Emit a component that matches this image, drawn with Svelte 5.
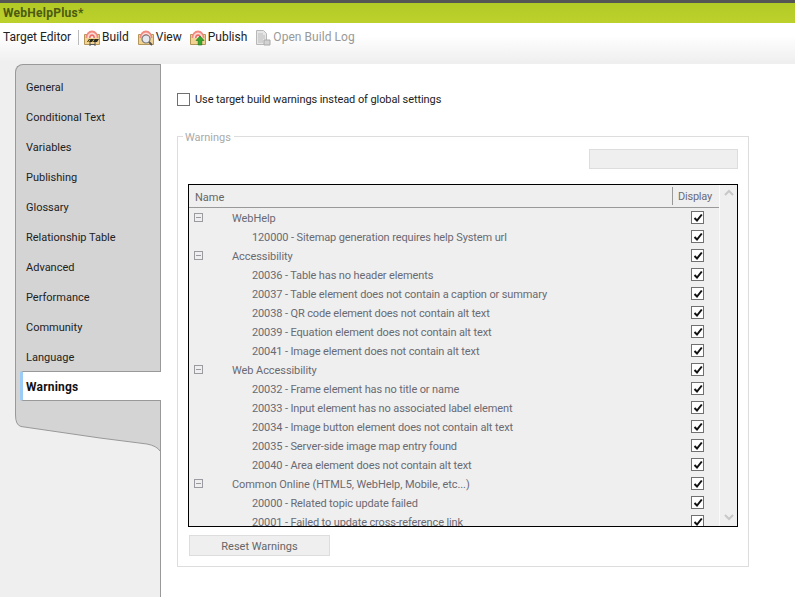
<script>
  const tabs = ['General', 'Conditional Text', 'Variables', 'Publishing', 'Glossary', 'Relationship Table', 'Advanced', 'Performance', 'Community', 'Language', 'Warnings'];

  const rows = [
    { group: true, text: 'WebHelp' },
    { text: '120000 - Sitemap generation requires help System url' },
    { group: true, text: 'Accessibility' },
    { text: '20036 - Table has no header elements' },
    { text: '20037 - Table element does not contain a caption or summary' },
    { text: '20038 - QR code element does not contain alt text' },
    { text: '20039 - Equation element does not contain alt text' },
    { text: '20041 - Image element does not contain alt text' },
    { group: true, text: 'Web Accessibility' },
    { text: '20032 - Frame element has no title or name' },
    { text: '20033 - Input element has no associated label element' },
    { text: '20034 - Image button element does not contain alt text' },
    { text: '20035 - Server-side image map entry found' },
    { text: '20040 - Area element does not contain alt text' },
    { group: true, text: 'Common Online (HTML5, WebHelp, Mobile, etc...)' },
    { text: '20000 - Related topic update failed' },
    { text: '20001 - Failed to update cross-reference link' }
  ];
</script>

{#snippet targetIcon()}
  <path d="M.5 5.5h15v10H.5z" fill="#f3d391" stroke="#b3965a" />
  <path d="M1.5 9a6.5 7.5 0 0 1 13 0z" fill="#f28a80" />
  <path d="M3.3 9a4.7 5.6 0 0 1 9.4 0z" fill="#fbdcd6" />
  <path d="M5 9a3 3.8 0 0 1 6 0z" fill="#ee6e64" />
  <path d="M6.6 9a1.4 2 0 0 1 2.8 0z" fill="#fdeeea" />
{/snippet}

<div class="app">
  <div class="titlebar">WebHelpPlus*</div>

  <div class="toolbar">
    <span class="tool-title">Target Editor</span>
    <span class="sep"></span>
    <button class="tool build">
      <svg width="17" height="17" viewBox="0 0 17 17">
        {@render targetIcon()}
        <path d="M5 10h10l-2 3H3z" fill="#2a2a20" />
        <path d="M6 10.5l-1.5 2.5M10 10.5L8.5 13" stroke="#e8c23a" />
        <path d="M6 13v4M11 13v4M6 15.5h5" stroke="#555" fill="none" />
      </svg>
      Build
    </button>
    <button class="tool view">
      <svg width="17" height="17" viewBox="0 0 17 17">
        {@render targetIcon()}
        <circle cx="8" cy="10" r="4" fill="#e4e8ee" stroke="#777" stroke-width="1.2" />
        <path d="M11 13l3 3" stroke="#555" stroke-width="1.8" />
      </svg>
      View
    </button>
    <button class="tool publish">
      <svg width="17" height="17" viewBox="0 0 17 17">
        {@render targetIcon()}
        <path d="M10 7l4 4.5h-2.2V16H8.200v-4.500H6z" fill="#35a82e" stroke="#1c6e1a" stroke-width=".6" />
      </svg>
      Publish
    </button>
    <button class="tool log" disabled>
      <svg width="17" height="17" viewBox="0 0 17 17">
        <path d="M2.500 1.500h7l3 3v11h-10z" fill="#e6e6e6" stroke="#b8b8b8" />
        <path d="M4 5h5M4 7h7M4 9h7M4 11h5M4 13h5" stroke="#bdbdbd" />
        <path d="M10 11h6v5h-6z" fill="#d2d2d2" stroke="#aaa" />
      </svg>
      Open Build Log
    </button>
  </div>

  <div class="main">
    <aside class="sidebar">
      <div class="tab-panel">
        {#each tabs as tab}
          <div class="tab" class:active={tab === 'Warnings'}>{tab}</div>
        {/each}
      </div>
      <svg class="tail" width="146" height="51" viewBox="0 0 146 51">
        <path d="M.5 0v15Q.5 25 6 26.500L85 38l47 6q10 2 13 7V0z" fill="#d4d4d4" />
        <path d="M.5 0v15Q.5 25 6 26.500L85 38l47 6q10 2 13 7" fill="none" stroke="#999" />
      </svg>
    </aside>

    <section class="content">
      <label class="use-target">
        <span class="box"></span>
        Use target build warnings instead of global settings
      </label>

      <div class="group">
        <span class="legend">Warnings</span>
        <div class="filter-row"><div class="filter"></div></div>

        <div class="grid">
          <div class="grid-main">
            <div class="grid-head">
              <span class="col-name">Name</span>
              <span class="col-display">Display</span>
            </div>
            <div class="grid-body">
              {#each rows as row}
                <div class="row">
                  {#if row.group}
                    <span class="minus"></span>
                  {/if}
                  <span class="row-text" class:child={!row.group}>{row.text}</span>
                  <span class="check">
                    <svg width="10" height="10" viewBox="0 0 10 10">
                      <path d="M1.500 5l2.500 2.500L8.800 1.500" fill="none" stroke="#111" stroke-width="2" />
                    </svg>
                  </span>
                </div>
              {/each}
            </div>
          </div>
          <div class="scrollbar">
            <svg width="10" height="8" viewBox="0 0 10 8"><path d="M1 6l4-4 4 4" fill="none" stroke="#c8c8c8" stroke-width="2" /></svg>
            <svg width="10" height="8" viewBox="0 0 10 8"><path d="M1 2l4 4 4-4" fill="none" stroke="#c8c8c8" stroke-width="2" /></svg>
          </div>
        </div>

        <button class="reset">Reset Warnings</button>
      </div>
    </section>
  </div>
</div>

<style>
  :global(body) {
    margin: 0;
    background: #efefef;
    overflow: hidden;
  }

  .app {
    height: 597px;
    display: flex;
    flex-direction: column;
    font-family: Roboto, "Noto Sans", sans-serif;
    font-size: 11px;
    color: #222;
    overflow: hidden;
  }

  .titlebar {
    box-sizing: border-box;
    height: 23px;
    border-top: 3px solid #555;
    background: linear-gradient(#b2ca26, #bdd12c);
    color: #4c5a12;
    font-weight: 700;
    font-size: 12px;
    letter-spacing: .25px;
    line-height: 20px;
    padding-left: 3px;
  }

  .toolbar {
    box-sizing: border-box;
    height: 41px;
    padding: 1px 0 14px 3px;
    background: linear-gradient(#fff 30%, #efefef 95%);
    display: flex;
    align-items: center;
    font-size: 12px;
  }

  .sep {
    width: 1px;
    height: 15px;
    background: #bbb;
    margin: 0 5px 0 7px;
  }

  .tool {
    display: flex;
    align-items: center;
    gap: 1px;
    padding: 0;
    border: none;
    background: none;
    font: inherit;
    color: inherit;
  }

  .build { margin-right: 9px; }
  .view { margin-right: 8px; }
  .publish { margin-right: 7px; }
  .log { color: #999; gap: 2px; letter-spacing: .05px; }

  .main {
    flex: 1;
    display: flex;
    min-height: 0;
  }

  .sidebar {
    box-sizing: border-box;
    width: 161px;
    padding-left: 15px;
    border-right: 1px solid #999;
  }

  .tab-panel {
    box-sizing: border-box;
    height: 336px;
    padding-top: 7px;
    background: #d4d4d4;
    border: 1px solid #999;
    border-width: 1px 0 0 1px;
    border-top-left-radius: 8px;
  }

  .tab {
    box-sizing: border-box;
    height: 30px;
    padding-top: 1px;
    line-height: 30px;
    margin-left: 4px;
    padding-left: 6px;
    color: #222;
  }

  .tab.active {
    position: relative;
    margin-top: -1px;
    margin-right: -1px;
    padding-left: 3px;
    padding-top: 0;
    background: #fff;
    border: 1px solid #999;
    border-width: 1px 0;
    border-left: 3px solid #9ccbf5;
    border-radius: 2px 0 0 2px;
    font-size: 12px;
    font-weight: 700;
    letter-spacing: .2px;
    color: #111;
    line-height: 30px;
  }

  .tail {
    display: block;
  }

  .content {
    flex: 1;
    background: #fff;
    padding: 29px 46px 0 16px;
  }

  .use-target {
    display: flex;
    align-items: center;
    gap: 5px;
    height: 13px;
    letter-spacing: -.08px;
  }

  .box {
    box-sizing: border-box;
    width: 13px;
    height: 13px;
    border: 1px solid #707070;
    background: #fff;
  }

  .group {
    position: relative;
    box-sizing: border-box;
    height: 431px;
    margin-top: 30px;
    padding: 12px 10px 0 10px;
    border: 1px solid #ddd;
  }

  .legend {
    position: absolute;
    top: -7px;
    left: 5px;
    padding: 0 3px 0 2px;
    background: #fff;
    color: #aaa;
    line-height: 15px;
  }

  .filter-row {
    display: flex;
    justify-content: flex-end;
  }

  .filter {
    box-sizing: border-box;
    width: 149px;
    height: 20px;
    background: #efefef;
    border: 1px solid #ddd;
  }

  .grid {
    display: flex;
    height: 343px;
    margin-top: 15px;
    border: 1px solid #000;
    box-sizing: border-box;
    background: #efefef;
    overflow: hidden;
  }

  .grid-main {
    flex: 1;
    min-width: 0;
  }

  .grid-head {
    box-sizing: border-box;
    height: 23px;
    display: flex;
    align-items: center;
    justify-content: space-between;
    border-bottom: 1px solid #999;
    color: #666;
  }

  .col-name {
    padding: 2px 0 0 6px;
  }

  .col-display {
    box-sizing: border-box;
    width: 47px;
    height: 18px;
    padding-right: 2px;
    line-height: 19px;
    text-align: center;
    border-left: 1px solid #999;
    color: #6a6a7a;
    letter-spacing: -.2px;
  }

  .scrollbar {
    box-sizing: border-box;
    width: 18px;
    border-left: 1px solid #fafafa;
    padding: 4px 0 5px;
    display: flex;
    flex-direction: column;
    justify-content: space-between;
    align-items: center;
  }

  .row {
    position: relative;
    height: 19px;
    display: flex;
    align-items: center;
    justify-content: space-between;
    color: #6a6a72;
  }

  .minus {
    position: absolute;
    left: 5px;
    top: 5px;
    box-sizing: border-box;
    width: 9px;
    height: 9px;
    border: 1px solid #9a9aa0;
    background: linear-gradient(#9a9aa0, #9a9aa0) center / 5px 1px no-repeat;
  }

  .row-text {
    padding: 1px 0 0 43px;
    letter-spacing: -.07px;
  }

  .row-text.child {
    padding-left: 63px;
    letter-spacing: -.12px;
  }

  .check {
    box-sizing: border-box;
    width: 13px;
    height: 13px;
    margin-right: 15px;
    border: 1px solid #707070;
    background: #fff;
    display: flex;
    align-items: center;
    justify-content: center;
  }

  .reset {
    display: block;
    box-sizing: border-box;
    width: 141px;
    height: 21px;
    margin: 8px 0 0 1px;
    padding: 1px 0 0;
    background: #efefef;
    border: 1px solid #ddd;
    font: inherit;
    color: #666;
  }
</style>
